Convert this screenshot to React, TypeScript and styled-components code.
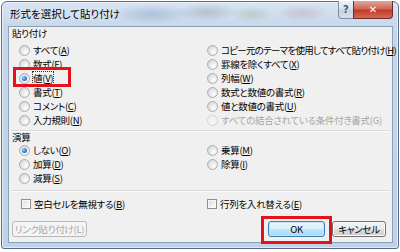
import React from "react";
import styled, { createGlobalStyle, css } from "styled-components";

const GlobalStyle = createGlobalStyle`
  html, body {
    margin: 0;
    padding: 0;
    background: #ffffff;
  }
  body {
    font-family: "Noto Sans CJK JP", "Noto Sans", sans-serif;
    font-feature-settings: "palt";
    color: #000;
  }
`;

const Window = styled.div`
  box-sizing: border-box;
  width: 398px;
  height: 248px;
  margin: 1px 0 0 1px;
  border: 1px solid #5a6d86;
  border-radius: 6px 6px 3px 3px;
  padding: 0 5px 5px 6px;
  display: flex;
  flex-direction: column;
  background:
    radial-gradient(ellipse 40px 10px at 150px 12px, rgba(120, 150, 190, 0.4), transparent),
    radial-gradient(ellipse 30px 9px at 205px 10px, rgba(110, 120, 135, 0.3), transparent),
    radial-gradient(ellipse 22px 8px at 250px 12px, rgba(140, 170, 120, 0.3), transparent),
    radial-gradient(ellipse 26px 9px at 300px 11px, rgba(170, 120, 120, 0.25), transparent),
    linear-gradient(180deg, #d7e4f2 0px, #c6d7ea 25px, #bfd2e8 100%);
  box-shadow: inset 0 0 0 1px rgba(255, 255, 255, 0.55);
`;

const TitleBar = styled.div`
  height: 24px;
  display: flex;
  align-items: flex-start;
  padding-left: 2px;
`;

const Title = styled.span`
  font-size: 10.5px;
  line-height: 24px;
  color: #000;
  text-shadow: 0 0 6px rgba(255, 255, 255, 0.9);
  flex: 1;
`;

const CaptionButtons = styled.div`
  display: flex;
  margin-top: -1px;
`;

const CaptionButton = styled.div<{ $close?: boolean }>`
  box-sizing: border-box;
  height: 18px;
  width: ${(p) => (p.$close ? "40px" : "15px")};
  border: 1px solid ${(p) => (p.$close ? "#6b2a2a" : "#7d8fa6")};
  border-top: none;
  display: flex;
  align-items: center;
  justify-content: center;
  font-family: "DejaVu Sans", sans-serif;
  font-weight: bold;
  font-size: 10px;
  ${(p) =>
    p.$close
      ? css`
          border-radius: 0 0 4px 0;
          background: linear-gradient(180deg, #e3a79c 0%, #d0675a 45%, #c13a2c 55%, #d66a52 100%);
          color: #fff;
        `
      : css`
          border-radius: 0 0 0 4px;
          border-right: none;
          background: linear-gradient(180deg, #eef3f9 0%, #d8e2ee 45%, #c6d3e3 55%, #d5e0ec 100%);
          color: #4a5a70;
        `}
`;

const Client = styled.div`
  flex: 1;
  box-sizing: border-box;
  border: 1px solid #8da1b8;
  background: #f0f0f0;
  display: flex;
  flex-direction: column;
  font-size: 9.5px;
  letter-spacing: -0.3px;
`;

const GroupLabel = styled.div<{ $h: number }>`
  padding-left: 3px;
  line-height: ${(p) => p.$h}px;
  height: ${(p) => p.$h}px;
`;

const OptionGrid = styled.div<{ $top: number; $left: number; $col: number; $rows?: number }>`
  display: grid;
  grid-template-columns: ${(p) => p.$col}px 1fr;
  grid-template-rows: repeat(${(p) => p.$rows ?? 1}, 14px);
  grid-auto-flow: column;
  margin-top: ${(p) => p.$top}px;
  padding-left: ${(p) => p.$left}px;
`;

const Divider = styled.div<{ $top: number }>`
  margin: ${(p) => p.$top}px 2px 0 2px;
  height: 1px;
  background: #dadada;
  border-bottom: 1px solid #fbfbfb;
`;

const Option = styled.label<{ $disabled?: boolean; $mark?: boolean; $tight?: boolean }>`
  position: relative;
  display: flex;
  align-items: center;
  gap: 2px;
  white-space: nowrap;
  line-height: 14px;
  color: ${(p) => (p.$disabled ? "#a6a6a6" : "#000")};
  ${(p) =>
    p.$tight &&
    css`
      letter-spacing: -0.75px;
    `}
  ${(p) =>
    p.$mark &&
    css`
      &::after {
        content: "";
        position: absolute;
        left: -6px;
        top: -4px;
        width: 58px;
        height: 20px;
        box-sizing: border-box;
        border: 3px solid #e3131b;
      }
    `}
`;

const Radio = styled.span<{ $checked?: boolean; $disabled?: boolean }>`
  box-sizing: border-box;
  width: 11px;
  height: 11px;
  flex: none;
  border-radius: 50%;
  border: 1px solid ${(p) => (p.$disabled ? "#d4d4d4" : "#a9adb2")};
  background: ${(p) =>
    p.$disabled
      ? "#f2f2f2"
      : "radial-gradient(circle at 65% 65%, #ffffff 0%, #e8e8e8 45%, #cfd0d2 100%)"};
  display: flex;
  align-items: center;
  justify-content: center;
  &::before {
    content: "";
    display: ${(p) => (p.$checked ? "block" : "none")};
    width: 5px;
    height: 5px;
    border-radius: 50%;
    background: radial-gradient(circle at 35% 35%, #8fd0ff 0%, #2e7bd0 55%, #1a4f93 100%);
  }
`;

const Check = styled.span`
  box-sizing: border-box;
  width: 10px;
  height: 10px;
  flex: none;
  border: 1px solid #8e8f8f;
  background: linear-gradient(135deg, #d8d8d8 0%, #f2f2f2 60%, #ffffff 100%);
  box-shadow: inset 0 0 0 1px #f7f7f7;
`;

const Text = styled.span<{ $focus?: boolean }>`
  padding: 0 1px;
  ${(p) =>
    p.$focus &&
    css`
      outline: 1px dotted #333;
      outline-offset: -1px;
    `}
`;

const Key = styled.u`
  text-underline-offset: 1px;
`;

const ButtonRow = styled.div`
  margin-top: 10px;
  padding: 0 6px 0 3px;
  display: flex;
  justify-content: space-between;
`;

const ButtonGroup = styled.div`
  display: flex;
  gap: 7px;
`;

const Button = styled.div<{ $w: number; $disabled?: boolean; $default?: boolean; $mark?: boolean }>`
  position: relative;
  box-sizing: border-box;
  width: ${(p) => p.$w}px;
  height: 16px;
  border-radius: 3px;
  display: flex;
  align-items: center;
  justify-content: center;
  white-space: nowrap;
  ${(p) =>
    p.$disabled
      ? css`
          border: 1px solid #b6babe;
          background: #f4f4f4;
          color: #a8a8a8;
        `
      : p.$default
        ? css`
            border: 1px solid #3c7fb1;
            background: linear-gradient(180deg, #eaf6fd 0%, #d9f0fc 48%, #bee6fd 52%, #a7d9f5 100%);
            box-shadow: inset 0 0 0 1px #c4e5f6;
            color: #000;
          `
        : css`
            border: 1px solid #707070;
            background: linear-gradient(180deg, #f2f2f2 0%, #ebebeb 48%, #dddddd 52%, #cfcfcf 100%);
            box-shadow: inset 0 0 0 1px #fbfbfb;
            color: #000;
          `}
  ${(p) =>
    p.$mark &&
    css`
      &::after {
        content: "";
        position: absolute;
        left: -8px;
        top: -6px;
        width: 71px;
        height: 28px;
        box-sizing: border-box;
        border: 3px solid #e3131b;
      }
    `}
`;

type Item = {
  label: string;
  key: string;
  checked?: boolean;
  disabled?: boolean;
  mark?: boolean;
  tight?: boolean;
};

const pasteItems: Item[] = [
  { label: "すべて", key: "A" },
  { label: "数式", key: "F" },
  { label: "値", key: "V", checked: true, mark: true },
  { label: "書式", key: "T" },
  { label: "コメント", key: "C" },
  { label: "入力規則", key: "N" },
  { label: "コピー元のテーマを使用してすべて貼り付け", key: "H", tight: true },
  { label: "罫線を除くすべて", key: "X" },
  { label: "列幅", key: "W" },
  { label: "数式と数値の書式", key: "R" },
  { label: "値と数値の書式", key: "U" },
  { label: "すべての結合されている条件付き書式", key: "G", disabled: true },
];

const opItems: (Item | null)[] = [
  { label: "しない", key: "O", checked: true },
  { label: "加算", key: "D" },
  { label: "減算", key: "S" },
  { label: "乗算", key: "M" },
  { label: "除算", key: "I" },
  null,
];

const RadioOption: React.FC<{ item: Item }> = ({ item }) => (
  <Option $disabled={item.disabled} $mark={item.mark} $tight={item.tight}>
    <Radio $checked={item.checked} $disabled={item.disabled} />
    <Text $focus={item.mark}>
      {item.label}(
      {item.disabled ? item.key : <Key>{item.key}</Key>})
    </Text>
  </Option>
);

const App: React.FC = () => {
  return (
    <>
      <GlobalStyle />
      <Window>
        <TitleBar>
          <Title>形式を選択して貼り付け</Title>
          <CaptionButtons>
            <CaptionButton>?</CaptionButton>
            <CaptionButton $close>✕</CaptionButton>
          </CaptionButtons>
        </TitleBar>
        <Client>
          <GroupLabel $h={13}>貼り付け</GroupLabel>
          <OptionGrid $top={3} $left={10} $col={188} $rows={6}>
            {pasteItems.map((item) => (
              <RadioOption key={item.key} item={item} />
            ))}
          </OptionGrid>
          <Divider $top={3} />
          <GroupLabel $h={11}>演算</GroupLabel>
          <OptionGrid $top={0} $left={10} $col={188} $rows={3}>
            {opItems.map((item, i) =>
              item ? <RadioOption key={item.key} item={item} /> : <span key={i} />,
            )}
          </OptionGrid>
          <Divider $top={5} />
          <OptionGrid $top={5} $left={12} $col={186}>
            <Option>
              <Check />
              <Text>
                空白セルを無視する(<Key>B</Key>)
              </Text>
            </Option>
            <Option>
              <Check />
              <Text>
                行列を入れ替える(<Key>E</Key>)
              </Text>
            </Option>
          </OptionGrid>
          <ButtonRow>
            <Button $w={75} $disabled>
              リンク貼り付け(L)
            </Button>
            <ButtonGroup>
              <Button $w={57} $default $mark>
                OK
              </Button>
              <Button $w={54}>キャンセル</Button>
            </ButtonGroup>
          </ButtonRow>
        </Client>
      </Window>
    </>
  );
};

export default App;
